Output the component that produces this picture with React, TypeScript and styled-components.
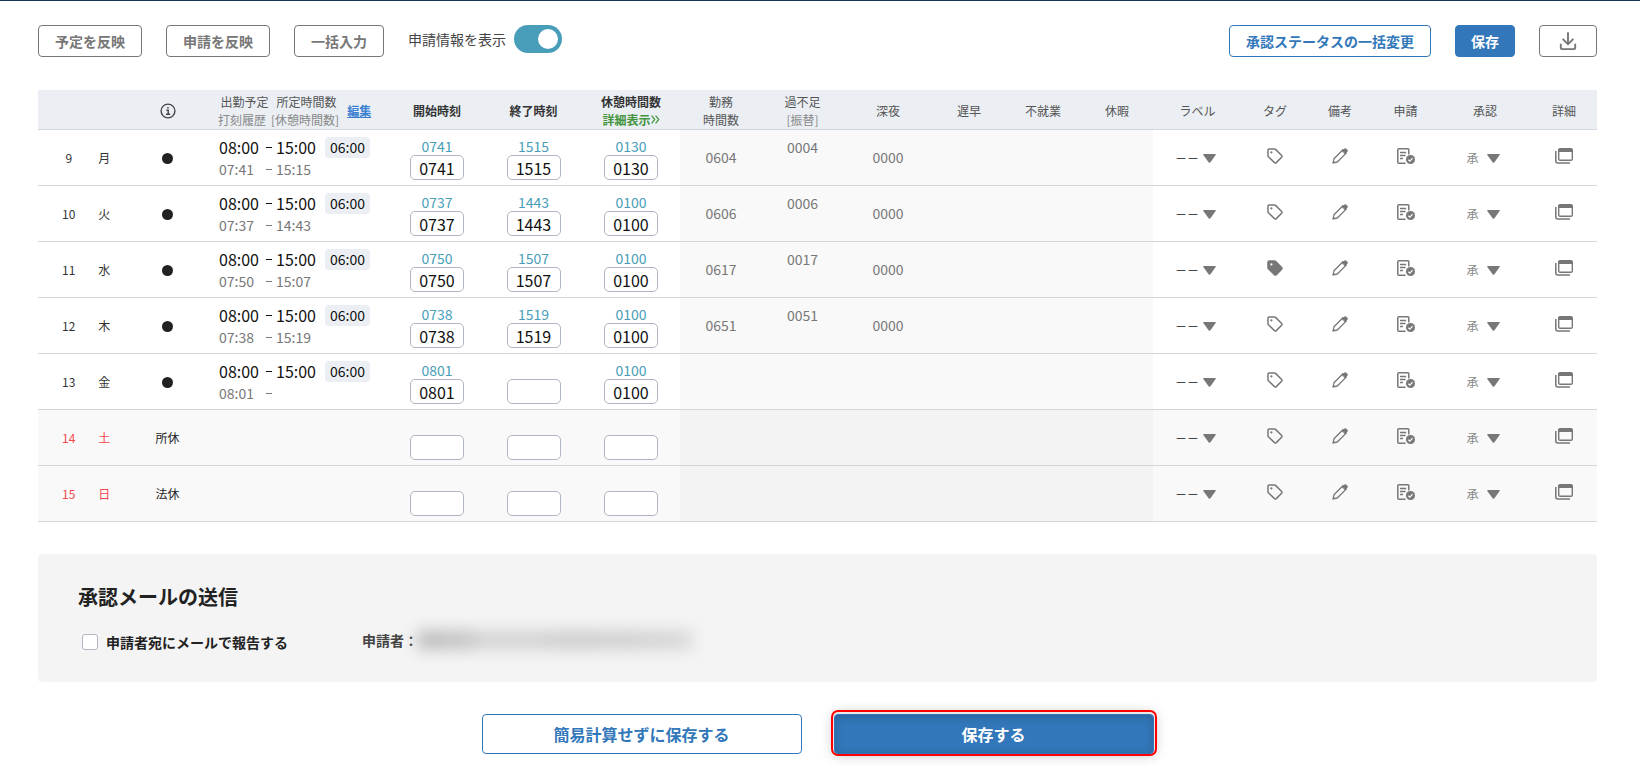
import React from 'react';
import styled, { createGlobalStyle } from 'styled-components';

const GlobalStyle = createGlobalStyle`
  *, *::before, *::after { box-sizing: border-box; }
  body {
    margin: 0;
    background: #fff;
    color: #222;
    font-family: "Noto Sans CJK JP", "Noto Sans", sans-serif;
    font-size: 14px;
  }
  button, input, select { font-family: inherit; }
`;

const Page = styled.main`
  border-top: 1px solid #17375e;
  padding: 24px 43px 12px 38px;
`;

const Toolbar = styled.div`
  display: flex;
  justify-content: space-between;
  margin-bottom: 33px;
`;

const ToolGroup = styled.div`
  display: flex;
  gap: 24px;
`;

type Tone = 'neutral' | 'outline' | 'primary';
const toneText = { neutral: '#777', outline: '#3277b9', primary: '#fff' };
const toneLine = { neutral: '#777', outline: '#3277b9', primary: '#3277b9' };

const Button = styled.button<{ $tone: Tone }>`
  display: inline-flex;
  align-items: center;
  justify-content: center;
  height: 32px;
  padding: 0 16px;
  border: 1px solid ${(p) => toneLine[p.$tone]};
  border-radius: 4px;
  background: ${(p) => (p.$tone === 'primary' ? '#3277b9' : '#fff')};
  color: ${(p) => toneText[p.$tone]};
  font-size: 14px;
  font-weight: 700;
  white-space: nowrap;
  cursor: pointer;
`;

const SaveButton = styled(Button)`
  padding: 0 15px;
`;

const SwitchLabel = styled.label`
  display: flex;
  align-items: center;
  gap: 8px;
  height: 28px;
  color: #444;
  white-space: nowrap;
`;

const Switch = styled.input`
  appearance: none;
  width: 48px;
  height: 28px;
  margin: 0;
  padding: 4px;
  border-radius: 14px;
  background: #aaa;
  display: flex;
  cursor: pointer;
  &::before {
    content: '';
    width: 20px;
    height: 20px;
    border-radius: 50%;
    background: #fff;
  }
  &:checked { background: #489eb9; justify-content: flex-end; }
`;

const Table = styled.table`
  width: 100%;
  table-layout: fixed;
  border-collapse: separate;
  border-spacing: 0;
`;

const Th = styled.th<{ $strong?: boolean }>`
  height: 40px;
  padding: 2px 0 0;
  border-bottom: 1px solid #d3d8df;
  background: #ebeff4;
  color: ${(p) => (p.$strong ? '#333' : '#555')};
  font-size: 12px;
  font-weight: ${(p) => (p.$strong ? 700 : 400)};
  line-height: 18px;
  white-space: nowrap;
`;

const Muted = styled.span`
  color: #888;
`;

const InfoMark = styled.span`
  display: flex;
  justify-content: center;
`;

const ScheduleHead = styled.div`
  display: flex;
  align-items: center;
  gap: 8px;
  padding-left: 4px;
`;

const HeadPairs = styled.div`
  display: flex;
  flex-direction: column;
  align-items: center;
`;

const HeadPair = styled.span<{ $muted?: boolean }>`
  display: flex;
  gap: ${(p) => (p.$muted ? 5 : 8)}px;
  color: ${(p) => (p.$muted ? '#888' : '#555')};
`;

const EditLink = styled.a`
  color: #3a7fd0;
  font-weight: 700;
`;

const DetailLink = styled.a`
  display: flex;
  align-items: center;
  justify-content: center;
  color: #45943f;
  text-decoration: none;
`;

const Tr = styled.tr<{ $holiday: boolean }>`
  background: ${(p) => (p.$holiday ? '#f9f9f9' : '#fff')};
`;

const Td = styled.td<{ $align?: 'top' | 'middle' | 'bottom' }>`
  height: 56px;
  padding: ${(p) => (p.$align === 'bottom' ? '0 0 5px' : p.$align === 'top' ? '7px 0 0' : '0')};
  border-bottom: 1px solid #d3d6dc;
  text-align: center;
  vertical-align: ${(p) => p.$align ?? 'middle'};
`;

const MarkTd = styled(Td)`
  padding: 0 1px 2px 0;
`;

const CalcTd = styled(Td)<{ $holiday: boolean }>`
  background: ${(p) => (p.$holiday ? '#f3f3f3' : '#f9f9f9')};
  color: #777;
  line-height: 20px;
  padding-bottom: ${(p) => (p.$align ? 0 : 2)}px;
`;

const IconTd = styled(Td)`
  padding-bottom: 8px;
`;

const DateCell = styled.div<{ $holiday: boolean }>`
  display: flex;
  padding-left: 13px;
  color: ${(p) => (p.$holiday ? '#f5484d' : '#333')};
  font-size: 12px;
  span { width: 36px; }
`;

const Dot = styled.span`
  display: inline-block;
  width: 11px;
  height: 11px;
  border-radius: 50%;
  background: #222;
  vertical-align: middle;
`;

const DayKind = styled.span`
  font-size: 12px;
`;

const ScheduleLine = styled.div<{ $actual?: boolean }>`
  display: grid;
  grid-template-columns: 45px 12px 49px auto;
  justify-content: start;
  align-items: center;
  height: 22px;
  padding-left: 5px;
  color: ${(p) => (p.$actual ? '#777' : '#111')};
  font-size: ${(p) => (p.$actual ? 14 : 16)}px;
  line-height: 22px;
  text-align: left;
`;

const Dash = styled.i`
  width: 6px;
  height: 1px;
  margin-left: 2px;
  background: currentColor;
`;

const Badge = styled.span`
  height: 21px;
  padding: 0 5px;
  border-radius: 4px;
  background: #ebeff4;
  font-size: 14px;
  line-height: 20px;
`;

const Punch = styled.div`
  color: #489eb9;
  font-size: 14px;
  line-height: 18px;
`;

const TimeInput = styled.input`
  display: block;
  width: 54px;
  height: 25px;
  margin: 0 auto;
  padding: 0;
  border: 1px solid #b0b6c2;
  border-radius: 5px;
  background: #fff;
  color: #111;
  font-size: 16px;
  text-align: center;
`;

const Picker = styled.div<{ $muted?: boolean }>`
  display: flex;
  align-items: center;
  justify-content: center;
  gap: ${(p) => (p.$muted ? 7 : 3)}px;
  padding: 1px 4px 0 0;
  color: ${(p) => (p.$muted ? '#888' : '#111')};
`;

const PickerSelect = styled.select`
  appearance: none;
  padding: 0;
  border: 0;
  background: none;
  color: inherit;
  font-size: 12px;
  line-height: 18px;
`;

const IconButton = styled.button`
  display: inline-flex;
  padding: 0;
  border: 0;
  background: none;
  color: #777;
  vertical-align: middle;
  cursor: pointer;
`;

const Panel = styled.section`
  margin-top: 32px;
  padding: 28px 40px;
  border-radius: 4px;
  background: #f4f4f4;
`;

const PanelTitle = styled.h2`
  margin: 0 0 18px;
  font-size: 20px;
  line-height: 30px;
`;

const PanelRow = styled.div`
  display: flex;
  align-items: flex-start;
  gap: 74px;
  font-weight: 700;
`;

const CheckLabel = styled.label`
  display: flex;
  align-items: center;
  gap: 8px;
  padding-left: 4px;
  line-height: 24px;
`;

const Check = styled.input`
  appearance: none;
  width: 16px;
  height: 16px;
  margin: 0;
  border: 1px solid #b0b6c2;
  border-radius: 3px;
  background: #fff;
  &:checked { background: #3277b9; }
`;

const Applicant = styled.div`
  display: flex;
  align-items: center;
  color: #444;
  line-height: 20px;
`;

const Redacted = styled.span`
  width: 274px;
  height: 18px;
  background: linear-gradient(90deg, #b6b6b6 0, #c2c2c2 50px, #d2d2d2 64px, #d2d2d2 105px, #cbcbcb 150px, #cecece 210px, #d6d6d6);
  filter: blur(8px);
`;

const Actions = styled.div`
  display: flex;
  justify-content: center;
  gap: 32px;
  margin-top: 32px;
`;

const ActionButton = styled(Button)<{ $marked?: boolean }>`
  width: 320px;
  height: 40px;
  font-size: 16px;
  ${(p) =>
    p.$marked &&
    `box-shadow: inset 0 2px 8px rgba(0, 0, 0, 0.18), 0 -1px 0 1px #e8e8e8, 0 -1px 0 3px #f00, 0 0 14px rgba(0, 0, 0, 0.28);`}
`;

const Caret = () => (
  <svg width="13" height="9" viewBox="0 0 13 9" aria-hidden="true">
    <path d="M0.8 0h11.4q1 0 .5.9L7.4 8.2q-.9 1.2-1.8 0L.3.9Q-.2 0 .8 0z" fill="#777" />
  </svg>
);

const InfoIcon = () => (
  <svg width="16" height="16" viewBox="0 0 16 16" fill="none" stroke="#444" strokeWidth="1.4" aria-hidden="true">
    <circle cx="8" cy="8" r="6.9" />
    <path d="M6.4 7.2h1.8v4M6 11.3h4.2" />
    <rect x="7.2" y="4" width="1.5" height="1.5" fill="#444" stroke="none" />
  </svg>
);

const DownloadIcon = () => (
  <svg width="24" height="24" viewBox="0 0 24 24" fill="none" stroke="#777" strokeWidth="1.9" aria-hidden="true">
    <path d="M12 3.2v11.6M6.6 9.8l5.4 5.4 5.4-5.4M4.8 14.8v3.4q0 1.9 1.9 1.9h10.6q1.9 0 1.9-1.9v-3.4" />
  </svg>
);

const ChevronsIcon = () => (
  <svg width="9" height="9" viewBox="0 0 9 9" fill="none" stroke="#45943f" strokeWidth="1.2" aria-hidden="true">
    <path d="M.6.6l3.2 3.900L.6 8.400M4.600.6l3.200 3.900L4.600 8.400" />
  </svg>
);

const TagIcon = ({ filled }: { filled: boolean }) => (
  <svg width="16" height="16" viewBox="0 0 16 16" fill="none" aria-hidden="true">
    <path
      d="M2.2 1h5.3q.6 0 1 .4l6.1 6q.8.9 0 1.8l-5.3 5.4q-.9.8-1.8 0L1.4 8.7Q1 8.300 1 7.700V2.200Q1 1 2.200 1z"
      stroke="#777"
      strokeWidth="1.5"
      fill={filled ? '#777' : 'none'}
    />
    <circle cx="4.400" cy="4.400" r="1.1" fill={filled ? '#fff' : '#777'} />
  </svg>
);

const PencilIcon = () => (
  <svg width="16" height="16" viewBox="0 0 16 16" fill="none" aria-hidden="true">
    <path d="M1.100 14.900l.9-4.200L10.900 1.800l3.300 3.300L5.300 14z" stroke="#777" strokeWidth="1.300" strokeLinejoin="round" />
    <path d="M9.800 2.900L12 .7q1.200-1 2.400 0l.9.9q1 1.200 0 2.400l-2.200 2.200z" fill="#777" />
    <path d="M.5 15.500l.8-3 2.200 2.200z" fill="#777" />
  </svg>
);

const RequestIcon = () => (
  <svg width="18" height="16" viewBox="0 0 18 16" fill="none" stroke="#777" aria-hidden="true">
    <path d="M8.500 15.200H1.800q-1 0-1-1V1.800q0-1 1-1h9q1 0 1 1v4.600" strokeWidth="1.500" />
    <path d="M3 4.500h6.200M3 7.500h5.500M3 10.500h3" strokeWidth="1.300" />
    <circle cx="13.500" cy="11.500" r="4.500" fill="#777" stroke="none" />
    <path d="M11.400 11.700l1.500 1.400 2.700-2.900" stroke="#fff" strokeWidth="1.200" />
  </svg>
);

const WindowsIcon = () => (
  <svg width="18" height="16" viewBox="0 0 18 16" fill="none" stroke="#777" aria-hidden="true">
    <rect x="3.700" y=".7" width="13.600" height="11.600" rx="1.400" strokeWidth="1.400" />
    <path d="M3.500 4V2Q3.500.5 5 .5h11Q17.500.5 17.500 2v2z" fill="#777" stroke="none" />
    <path d="M.8 3v10q0 2 2 2H15" strokeWidth="1.500" />
  </svg>
);

const columns = [84, 92, 175, 96, 97, 98, 82, 81, 90, 72, 76, 72, 89, 66, 64, 67, 92, 66];

interface Day {
  date: number;
  weekday: string;
  kind?: string;
  clock?: [string, string];
  start?: string;
  end?: string;
  rest?: string;
  worked?: string;
  balance?: string;
  night?: string;
  tagged?: boolean;
}

const days: Day[] = [
  { date: 9, weekday: '月', clock: ['07:41', '15:15'], start: '0741', end: '1515', rest: '0130', worked: '0604', balance: '0004', night: '0000' },
  { date: 10, weekday: '火', clock: ['07:37', '14:43'], start: '0737', end: '1443', rest: '0100', worked: '0606', balance: '0006', night: '0000' },
  { date: 11, weekday: '水', clock: ['07:50', '15:07'], start: '0750', end: '1507', rest: '0100', worked: '0617', balance: '0017', night: '0000', tagged: true },
  { date: 12, weekday: '木', clock: ['07:38', '15:19'], start: '0738', end: '1519', rest: '0100', worked: '0651', balance: '0051', night: '0000' },
  { date: 13, weekday: '金', clock: ['08:01', ''], start: '0801', rest: '0100' },
  { date: 14, weekday: '土', kind: '所休' },
  { date: 15, weekday: '日', kind: '法休' },
];

const TimeCell = ({ value, label }: { value?: string; label: string }) => (
  <Td $align="bottom">
    {value && <Punch>{value}</Punch>}
    <TimeInput type="text" defaultValue={value ?? ''} aria-label={label} />
  </Td>
);

const DayRow = ({ day }: { day: Day }) => {
  const holiday = Boolean(day.kind);
  return (
    <Tr $holiday={holiday}>
      <Td>
        <DateCell $holiday={holiday}>
          <span>{day.date}</span>
          <span>{day.weekday}</span>
        </DateCell>
      </Td>
      <MarkTd>{day.kind ? <DayKind>{day.kind}</DayKind> : <Dot />}</MarkTd>
      <Td $align="bottom">
        {day.clock && (
          <>
            <ScheduleLine>
              <span>08:00</span>
              <Dash />
              <span>15:00</span>
              <Badge>06:00</Badge>
            </ScheduleLine>
            <ScheduleLine $actual>
              <span>{day.clock[0]}</span>
              <Dash />
              <span>{day.clock[1]}</span>
            </ScheduleLine>
          </>
        )}
      </Td>
      <TimeCell value={day.start} label={`${day.date}日 開始時刻`} />
      <TimeCell value={day.end} label={`${day.date}日 終了時刻`} />
      <TimeCell value={day.rest} label={`${day.date}日 休憩時間数`} />
      <CalcTd $holiday={holiday}>{day.worked}</CalcTd>
      <CalcTd $holiday={holiday} $align="top">{day.balance}</CalcTd>
      <CalcTd $holiday={holiday}>{day.night}</CalcTd>
      <CalcTd $holiday={holiday} />
      <CalcTd $holiday={holiday} />
      <CalcTd $holiday={holiday} />
      <Td>
        <Picker>
          <PickerSelect aria-label="ラベル">
            <option>－－</option>
          </PickerSelect>
          <Caret />
        </Picker>
      </Td>
      <IconTd>
        <IconButton type="button" aria-label="タグ"><TagIcon filled={Boolean(day.tagged)} /></IconButton>
      </IconTd>
      <IconTd>
        <IconButton type="button" aria-label="備考"><PencilIcon /></IconButton>
      </IconTd>
      <IconTd>
        <IconButton type="button" aria-label="申請"><RequestIcon /></IconButton>
      </IconTd>
      <Td>
        <Picker $muted>
          <PickerSelect aria-label="承認">
            <option>承</option>
          </PickerSelect>
          <Caret />
        </Picker>
      </Td>
      <IconTd>
        <IconButton type="button" aria-label="詳細"><WindowsIcon /></IconButton>
      </IconTd>
    </Tr>
  );
};

export default function App() {
  return (
    <>
      <GlobalStyle />
      <Page>
        <Toolbar>
          <ToolGroup>
            <Button type="button" $tone="neutral">予定を反映</Button>
            <Button type="button" $tone="neutral">申請を反映</Button>
            <Button type="button" $tone="neutral">一括入力</Button>
            <SwitchLabel>
              申請情報を表示
              <Switch type="checkbox" role="switch" defaultChecked />
            </SwitchLabel>
          </ToolGroup>
          <ToolGroup>
            <Button type="button" $tone="outline">承認ステータスの一括変更</Button>
            <SaveButton type="button" $tone="primary">保存</SaveButton>
            <Button type="button" $tone="neutral" aria-label="ダウンロード"><DownloadIcon /></Button>
          </ToolGroup>
        </Toolbar>

        <Table>
          <colgroup>
            {columns.map((w, i) => <col key={i} width={w} />)}
          </colgroup>
          <thead>
            <tr>
              <Th />
              <Th><InfoMark><InfoIcon /></InfoMark></Th>
              <Th>
                <ScheduleHead>
                  <HeadPairs>
                    <HeadPair><span>出勤予定</span><span>所定時間数</span></HeadPair>
                    <HeadPair $muted><span>打刻履歴</span><span>[休憩時間数]</span></HeadPair>
                  </HeadPairs>
                  <EditLink href="#edit">編集</EditLink>
                </ScheduleHead>
              </Th>
              <Th $strong>開始時刻</Th>
              <Th $strong>終了時刻</Th>
              <Th $strong>
                休憩時間数
                <DetailLink href="#detail">詳細表示<ChevronsIcon /></DetailLink>
              </Th>
              <Th>勤務<br />時間数</Th>
              <Th>過不足<br /><Muted>[振替]</Muted></Th>
              <Th>深夜</Th>
              <Th>遅早</Th>
              <Th>不就業</Th>
              <Th>休暇</Th>
              <Th>ラベル</Th>
              <Th>タグ</Th>
              <Th>備考</Th>
              <Th>申請</Th>
              <Th>承認</Th>
              <Th>詳細</Th>
            </tr>
          </thead>
          <tbody>
            {days.map((day) => <DayRow key={day.date} day={day} />)}
          </tbody>
        </Table>

        <Panel>
          <PanelTitle>承認メールの送信</PanelTitle>
          <PanelRow>
            <CheckLabel>
              <Check type="checkbox" />
              申請者宛にメールで報告する
            </CheckLabel>
            <Applicant>申請者：<Redacted /></Applicant>
          </PanelRow>
        </Panel>

        <Actions>
          <ActionButton type="button" $tone="outline">簡易計算せずに保存する</ActionButton>
          <ActionButton type="button" $tone="primary" $marked>保存する</ActionButton>
        </Actions>
      </Page>
    </>
  );
}
